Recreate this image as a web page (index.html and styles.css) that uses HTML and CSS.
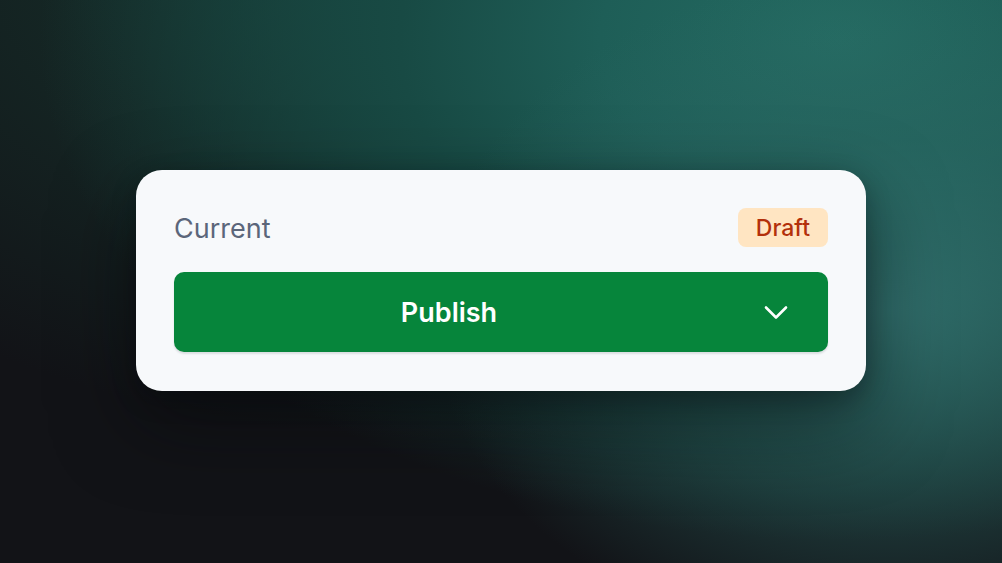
FILE: index.html
```html
<!DOCTYPE html>
<html lang="en">
<head>
<meta charset="utf-8">
<title>Publish</title>
<link rel="stylesheet" href="styles.css">
</head>
<body>
<main class="stage">
  <section class="card">
    <div class="card-head">
      <span class="label">Current</span>
      <span class="badge">Draft</span>
    </div>
    <button class="split-btn" type="button">
      <span class="split-main">Publish</span>
      <span class="split-caret">
        <svg width="26" height="26" viewBox="0 0 26 26" fill="none" stroke="#fff" stroke-width="2.6" stroke-linecap="round" stroke-linejoin="round"><path d="M3 8.5l10 10 10-10"/></svg>
      </span>
    </button>
  </section>
</main>
</body>
</html>
```
FILE: styles.css
```css
* { box-sizing: border-box; }
html, body { margin: 0; height: 100%; }
body {
  font-family: Inter, "Noto Sans", sans-serif;
  background: #121317;
  overflow: hidden;
}
.stage {
  width: 1002px;
  height: 563px;
  display: flex;
  align-items: center;
  justify-content: center;
  background:
    radial-gradient(ellipse 460px 340px at 890px 310px, rgba(52,114,112,0.85) 0%, rgba(44,104,100,0.5) 50%, rgba(30,80,76,0) 100%),
    radial-gradient(ellipse 800px 500px at 840px 40px, #246b62 0%, #1e5e57 30%, #184a44 55%, rgba(18,19,23,0) 100%),
    radial-gradient(ellipse 820px 480px at 460px -40px, #17403a 0%, rgba(22,48,43,0.65) 50%, rgba(18,19,23,0) 100%),
    #121317;
}
.card {
  width: 730px;
  margin-top: -2px;
  padding: 38px 38px 39px 38px;
  background: #f7f9fb;
  border-radius: 26px;
  box-shadow: 0 30px 80px rgba(5,8,10,0.5), 0 8px 24px rgba(5,8,10,0.28);
}
.card-head {
  display: flex;
  align-items: center;
  justify-content: space-between;
  height: 39px;
}
.label {
  font-size: 27px;
  color: #5b667a;
  line-height: 1;
  padding-top: 1px;
}
.badge {
  height: 39px;
  padding: 0 18px;
  display: flex;
  align-items: center;
  background: #ffe5c2;
  color: #b3300b;
  font-size: 23px;
  font-weight: 500;
  border-radius: 8px;
}
.split-btn {
  margin-top: 25px;
  width: 100%;
  height: 80px;
  border: 0;
  padding: 0;
  display: flex;
  background: #06853b;
  border-radius: 10px;
  box-shadow: 0 2px 2px rgba(15,30,40,0.12);
  color: #fff;
  font-family: inherit;
  cursor: pointer;
}
.split-main {
  flex: 1;
  display: flex;
  align-items: center;
  justify-content: center;
  font-size: 27px;
  font-weight: 600;
}
.split-caret {
  width: 104px;
  display: flex;
  align-items: center;
  justify-content: center;
}
```
